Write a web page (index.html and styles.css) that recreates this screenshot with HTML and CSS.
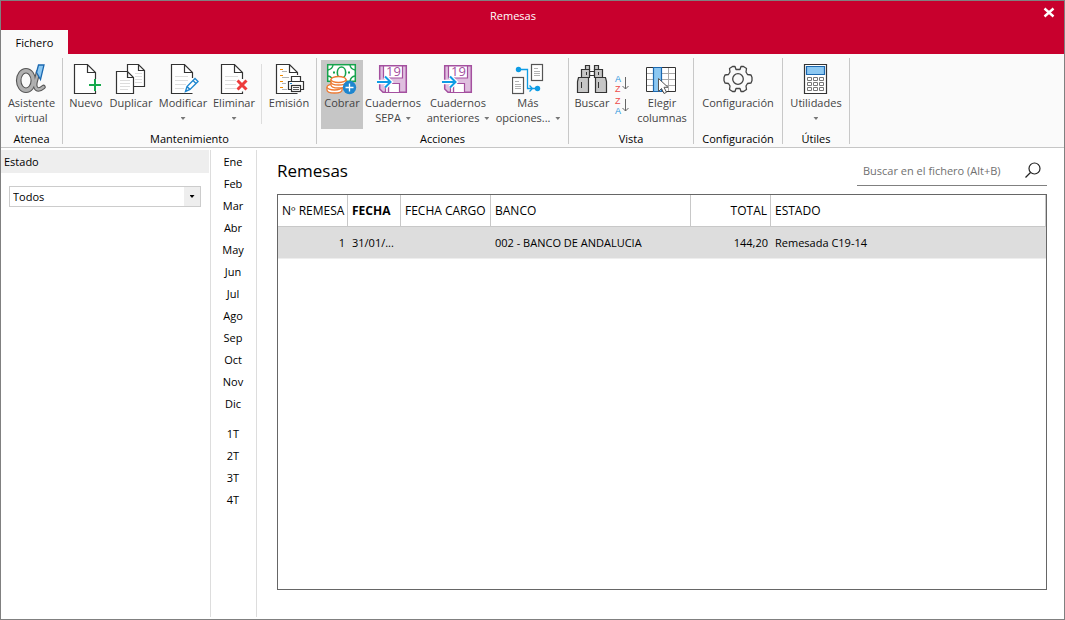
FILE: index.html
```html
<!DOCTYPE html>
<html lang="es">
<head>
<meta charset="utf-8">
<title>Remesas</title>
<link rel="stylesheet" href="styles.css">
</head>
<body>
<div class="window">
  <header class="titlebar">
    <h1 class="window-title">Remesas</h1>
    <button class="close" aria-label="Cerrar"><svg width="12" height="12" viewBox="0 0 12 12"><path d="M1.500 1.500l9 8M10.500 1.500l-9 8" stroke="#fff" stroke-width="2.400"/></svg></button>
    <button class="tab">Fichero</button>
  </header>

  <nav class="ribbon" aria-label="Fichero">
    <section class="group group-atenea">
      <div class="tools">
        <button class="tool">
          <svg class="icon" viewBox="0 0 32 32"><g fill="none" stroke-linecap="round"><g stroke="#555"><ellipse cx="11" cy="17.500" rx="7.300" ry="9.700" stroke-width="5.600"/><path d="M23 9C22 16 19 20 20.500 24Q22.500 29 28.500 24" stroke-width="4.600"/></g><g stroke="#b0b0b0"><ellipse cx="11" cy="17.500" rx="7.300" ry="9.700" stroke-width="3.400"/><path d="M23 9C22 16 19 20 20.500 24Q22.500 29 28.500 24" stroke-width="2.400"/></g></g><path d="M23.500 2h5.500l-3.500 14.500-4-7z" fill="#8cc8f2" stroke="#1b68b0" stroke-width="1.300"/></svg>
          <span>Asistente<br>virtual</span>
        </button>
      </div>
      <h2 class="group-name">Atenea</h2>
    </section>

    <section class="group group-mantenimiento">
      <div class="tools">
        <button class="tool tool-nuevo">
          <svg class="icon" viewBox="0 0 32 32"><path d="M25.500 16V9.500L17.500 1.500h-13v29h21V28M17.500 1.500v8h8" class="page"/><path d="M25 16v12M19 22h12" stroke="#fff" stroke-width="4"/><path d="M25 16v12M19 22h12" stroke="#16a94c" stroke-width="2"/></svg>
          <span>Nuevo</span>
        </button>
        <button class="tool tool-duplicar">
          <svg class="icon" viewBox="0 0 32 32"><path d="M12.500 1.500h11l6 6v16h-17zM23.500 1.500v6h6" class="page"/><path d="M20 10.500h7M20 13.500h7M20 16.500h7M20 19.500h7" class="faint"/><path d="M1.500 8.500h11l6 6v16h-17zM12.500 8.500v6h6" class="page"/><path d="M5 17.500h10M5 20.500h10M5 23.500h10M5 26.500h8" class="faint"/></svg>
          <span>Duplicar</span>
        </button>
        <button class="tool tool-modificar">
          <svg class="icon" viewBox="0 0 32 32"><path d="M25.500 15V9.500L17.500 1.500h-13v29h21M17.500 1.500v8h8" class="page"/><path d="M8 13.500h13M8 17.500h13M8 21.500h11M8 25.500h9" class="faint"/><path d="M18.500 28.500l1.500-5 8-8 3 3-8 8zM20 23.500l3 3M26 17.500l3 3" fill="#fff" stroke="#1e86cf" stroke-width="1.400"/></svg>
          <span>Modificar</span><i class="caret"></i>
        </button>
        <button class="tool tool-eliminar">
          <svg class="icon" viewBox="0 0 32 32"><path d="M24.500 16V9.500L16.500 1.500h-13v29h21v-2M16.500 1.500v8h8" class="page"/><path d="M7 13.500h13M7 17.500h11M7 21.500h11M7 25.500h11" class="faint"/><path d="M19.500 17.500l9 9M28.500 17.500l-9 9" stroke="#ed3b3b" stroke-width="3"/></svg>
          <span>Eliminar</span><i class="caret"></i>
        </button>
        <div class="divider"></div>
        <button class="tool tool-emision">
          <svg class="icon" viewBox="0 0 32 32"><path d="M24.500 12V9.500L16.500 1.500h-13v29h21M16.500 1.500v8h8" class="page"/><path d="M7 6.500h3M7 12.500h3M7 18.500h3M7 24.500h3" stroke="#f18a00"/><path d="M9 8.500h5M9 14.500h7M9 20.500h4M9 26.500h5" stroke="#b3b3b3"/><path d="M18.500 18v-4.500h9V18" class="page"/><path d="M18.500 26.500h-3v-8h15v8h-3" class="page"/><rect x="18.500" y="22.500" width="9" height="6" class="page"/><path d="M20 24.500h6M20 26.500h6" stroke="#555"/><path d="M17 20.500h2" stroke="#1e86cf"/></svg>
          <span>Emisión</span>
        </button>
      </div>
      <h2 class="group-name">Mantenimiento</h2>
    </section>

    <section class="group group-acciones">
      <div class="tools">
        <button class="tool tool-cobrar">
          <svg class="icon" viewBox="0 0 32 32"><rect x="1.700" y="1.700" width="27.600" height="16.600" fill="#fff" stroke="#16a34c" stroke-width="1.500"/><path d="M7 2Q6.500 6 2 7M24 2q.5 4 5 5M2 13q4 .5 5 5M29 13q-4 .5-5 5" fill="none" stroke="#16a34c" stroke-width="1.400"/><ellipse cx="15.500" cy="9.500" rx="4.200" ry="5.500" fill="none" stroke="#16a34c" stroke-width="1.600"/><path d="M7 9.500h2M22 9.500h2" stroke="#16a34c" stroke-width="2"/><g fill="#fff" stroke="#ef7a32" stroke-width="1.300"><path d="M1 24v3c0 4 15 4 15 0v-3"/><ellipse cx="8.500" cy="24" rx="7.500" ry="3"/><path d="M5 19v3c0 4 15 4 15 0v-3"/><path d="M5 16v3c0 4 15 4 15 0v-3"/><ellipse cx="12.500" cy="16.500" rx="7.500" ry="3"/></g><circle cx="23.500" cy="24.500" r="6.700" fill="#1e86cf"/><path d="M23.500 20.500v8M19.500 24.500h8" stroke="#fff" stroke-width="1.300"/></svg>
          <span>Cobrar</span>
        </button>
        <button class="tool tool-sepa">
          <svg class="icon" viewBox="0 0 32 32"><path d="M2.700 2.700h26.600v26.600H6l-3.300-3.300z" fill="#dfbfdf" stroke="#a4509f" stroke-width="1.500"/><path d="M6.500 3h19v12h-19zM8.500 20.500h14v9h-14z" fill="#fff" stroke="#a4509f" stroke-width="1.200"/><path d="M11.500 23v6" stroke="#a4509f" stroke-width="1.400"/><text x="9" y="13" class="num">19</text><path d="M0 19h13M8 13.500l5.500 5.500L8 24.500" fill="none" stroke="#fff" stroke-width="4.500"/><path d="M0 19h13M8 13.500l5.500 5.500L8 24.500" fill="none" stroke="#0e9ce5" stroke-width="2"/></svg>
          <span>Cuadernos<br>SEPA <i class="caret inline"></i></span>
        </button>
        <button class="tool tool-anteriores">
          <svg class="icon" viewBox="0 0 32 32"><path d="M2.700 2.700h26.600v26.600H6l-3.300-3.300z" fill="#dfbfdf" stroke="#a4509f" stroke-width="1.500"/><path d="M6.500 3h19v12h-19zM8.500 20.500h14v9h-14z" fill="#fff" stroke="#a4509f" stroke-width="1.200"/><path d="M11.500 23v6" stroke="#a4509f" stroke-width="1.400"/><text x="9" y="13" class="num">19</text><path d="M0 19h13M8 13.500l5.500 5.500L8 24.500" fill="none" stroke="#fff" stroke-width="4.500"/><path d="M0 19h13M8 13.500l5.500 5.500L8 24.500" fill="none" stroke="#0e9ce5" stroke-width="2"/></svg>
          <span>Cuadernos<br>anteriores <i class="caret inline"></i></span>
        </button>
        <button class="tool tool-mas">
          <svg class="icon" viewBox="0 0 32 32"><rect x="19.500" y="1.500" width="11" height="16" class="doc"/><rect x=".5" y="14.500" width="11" height="16" class="doc"/><path d="M22 5.500h4M22 8.500h6M22 10.500h6M22 12.500h6M3 18.500h4M3 21.500h6M3 23.500h6M3 25.500h6" stroke="#b3b3b3"/><path d="M6.500 6.500h9v19h9M17.500 22.500l3 3-3 3" fill="none" stroke="#0e9ce5" stroke-width="1.300"/><circle cx="6.500" cy="6.500" r="2.700" fill="#0e9ce5"/><circle cx="25.500" cy="25.500" r="2.700" fill="#0e9ce5"/></svg>
          <span>Más<br>opciones... <i class="caret inline"></i></span>
        </button>
      </div>
      <h2 class="group-name">Acciones</h2>
    </section>

    <section class="group group-vista">
      <div class="tools">
        <button class="tool tool-buscar">
          <svg class="icon" viewBox="0 0 32 32"><g fill="#c6c6c6" stroke="#333" stroke-width="1.200"><path d="M9.500 2.500h4v4h-4zM18.500 2.500h4v4h-4z"/><path d="M13.500 8.500h5v4h-5z" fill="#fff"/><path d="M5.500 6.500h8v8h-8zM18.500 6.500h8v8h-8z"/><path d="M2.500 14.500h10v15h-11v-11zM19.500 14.500h10l1 4v11h-11z"/></g><path d="M5.500 19v6M22.500 19v6M10.500 9v3M22.500 9v3" stroke="#333"/></svg>
          <span>Buscar</span>
        </button>
        <div class="sorts">
          <button class="sort" aria-label="Orden ascendente"><svg width="16" height="22" viewBox="0 0 16 22"><text x="1" y="9" class="letter blue">A</text><text x="1" y="19" class="letter red">Z</text><path d="M11.500 4v12M8.500 13l3 3 3-3" fill="none" stroke="#666"/></svg></button>
          <button class="sort" aria-label="Orden descendente"><svg width="16" height="22" viewBox="0 0 16 22"><text x="1" y="9" class="letter red">Z</text><text x="1" y="19" class="letter blue">A</text><path d="M11.500 4v12M8.500 13l3 3 3-3" fill="none" stroke="#666"/></svg></button>
        </div>
        <button class="tool tool-elegir">
          <svg class="icon" viewBox="0 0 32 32"><path d="M.5 4.500h29v24H.5z" fill="#fff"/><path d="M1 10.500h28M1 16.500h28M1 22.500h28M22.500 5v23" stroke="#aaa"/><path d="M.5 4.500h29v24H.5z" fill="none" stroke="#333"/><path d="M7.500 4.500h8v24h-8z" fill="#8cc8f2" stroke="#1b68b0" stroke-width="1.200"/><path d="M12.500 15.500v13l3-3 2.500 5 2.500-1.200-2.500-5h4z" fill="#fff" stroke="#555"/></svg>
          <span>Elegir<br>columnas</span>
        </button>
      </div>
      <h2 class="group-name">Vista</h2>
    </section>

    <section class="group group-configuracion">
      <div class="tools">
        <button class="tool">
          <svg class="icon" viewBox="0 0 32 32"><g fill="none" stroke="#444" stroke-width="1.300" stroke-linejoin="round"><path d="M10.500 3.500h2.500l1 3h4l1-3h2.500l3 2-.500 3.500 1.500 2.500 3.500.500 1 2.500v3l-1 2.500-3.500.500-1.500 2.500.500 3.500-3 2H19l-1-3h-4l-1 3h-2.500l-3-2 .500-3.500-1.500-2.500-3.500-.500-1-2.500v-3l1-2.500 3.500-.500L8 9l-.500-3.500z"/><circle cx="16" cy="16" r="5.300"/></g></svg>
          <span>Configuración</span>
        </button>
      </div>
      <h2 class="group-name">Configuración</h2>
    </section>

    <section class="group group-utiles">
      <div class="tools">
        <button class="tool">
          <svg class="icon" viewBox="0 0 32 32"><path d="M4.500 1.500h22v29h-22z" fill="#fff" stroke="#333" stroke-width="1.200"/><path d="M6.500 3.500h18v8h-18z" fill="#8cc8f2" stroke="#1b68b0" stroke-width="1.200"/><g fill="#fff" stroke="#777"><path d="M7.500 14.500h4v3h-4zM13.500 14.500h4v3h-4zM19.500 14.500h4v3h-4zM7.500 19.500h4v3h-4zM13.500 19.500h4v3h-4zM19.500 19.500h4v3h-4zM7.500 24.500h4v3h-4zM13.500 24.500h4v3h-4zM19.500 24.500h4v3h-4z"/></g></svg>
          <span>Utilidades</span><i class="caret"></i>
        </button>
      </div>
      <h2 class="group-name">Útiles</h2>
    </section>
  </nav>

  <div class="workspace">
    <aside class="filters">
      <label class="filter-name" for="estado">Estado</label>
      <div class="select-box">
        <select id="estado"><option>Todos</option></select>
        <span class="drop"><i class="caret dark"></i></span>
      </div>
    </aside>

    <nav class="periods" aria-label="Periodo">
      <div class="months">
        <button>Ene</button><button>Feb</button><button>Mar</button><button>Abr</button><button>May</button><button>Jun</button><button>Jul</button><button>Ago</button><button>Sep</button><button>Oct</button><button>Nov</button><button>Dic</button>
      </div>
      <div class="quarters">
        <button>1T</button><button>2T</button><button>3T</button><button>4T</button>
      </div>
    </nav>

    <main class="content">
      <div class="heading">
        <h2 class="title">Remesas</h2>
        <form class="search">
          <input type="text" placeholder="Buscar en el fichero (Alt+B)" aria-label="Buscar en el fichero">
          <button type="button" aria-label="Buscar"><svg width="16" height="16" viewBox="0 0 16 16"><g fill="none" stroke="#222" stroke-width="1.200"><circle cx="9.500" cy="6.500" r="5.500"/><path d="M5.500 10.500L.5 15.500"/></g></svg></button>
        </form>
      </div>
      <div class="grid">
        <table>
          <colgroup><col class="col-num"><col class="col-fecha"><col class="col-cargo"><col class="col-banco"><col class="col-total"><col></colgroup>
          <thead><tr><th>Nº REMESA</th><th class="sorted">FECHA</th><th>FECHA CARGO</th><th>BANCO</th><th class="right">TOTAL</th><th>ESTADO</th></tr></thead>
          <tbody><tr><td class="right">1</td><td>31/01/...</td><td></td><td>002 - BANCO DE ANDALUCIA</td><td class="right">144,20</td><td>Remesada C19-14</td></tr></tbody>
        </table>
      </div>
    </main>
  </div>
</div>
</body>
</html>
```
FILE: styles.css
```css
* { box-sizing: border-box; }

body {
  margin: 0;
  font: 11px/15px "Open Sans", "Noto Sans", sans-serif;
  color: #000;
}

button {
  margin: 0;
  padding: 0;
  border: 0;
  background: none;
  font: inherit;
  color: inherit;
}

h1, h2 { margin: 0; font: inherit; }

.window {
  display: flex;
  flex-direction: column;
  min-height: 100vh;
  border: 1px solid #808080;
  background: #fff;
}

.titlebar {
  display: grid;
  grid-template-columns: 40px 1fr 40px;
  grid-template-rows: 29px 24px;
  background: #c8002d;
}

.window-title {
  grid-column: 2;
  padding-right: 39px;
  line-height: 30px;
  text-align: center;
  color: #fff;
}

.close {
  display: flex;
  justify-content: flex-end;
  align-items: center;
  padding: 0 9px 6px 0;
}

.tab {
  grid-row: 2;
  grid-column: 1 / 3;
  justify-self: start;
  width: 67px;
  background: #fafafa;
}

.ribbon {
  display: flex;
  height: 94px;
  padding-top: 4px;
  background: #fafafa;
  border-bottom: 1px solid #c6c6c6;
}

.group {
  display: flex;
  flex-direction: column;
  height: 86px;
  border-right: 1px solid #c8c8c8;
}

.group-atenea { width: 62px; }
.group-mantenimiento { width: 254px; }
.group-acciones { width: 252px; }
.group-vista { width: 125px; }
.group-configuracion { width: 89px; }
.group-utiles { width: 67px; }

.tools {
  display: flex;
  flex: none;
  justify-content: center;
  height: 73px;
  padding: 2px 0;
}

.group-mantenimiento .tools,
.group-vista .tools { justify-content: flex-start; padding-left: 2px; }
.group-acciones .tools { justify-content: flex-start; padding-left: 4px; }

.group-name { text-align: center; }

.tool {
  display: flex;
  flex-direction: column;
  align-items: center;
  padding-top: 3px;
  color: #444;
  white-space: nowrap;
}

.icon {
  width: 32px;
  height: 32px;
  flex: none;
}

.tool-nuevo { width: 42px; }
.tool-duplicar { width: 48px; }
.tool-modificar { width: 56px; }
.tool-eliminar { width: 46px; }
.tool-emision { width: 52px; }
.tool-cobrar { width: 42px; background: #c6c6c6; }
.tool-sepa { width: 60px; }
.tool-anteriores { width: 70px; }
.tool-mas { width: 70px; }
.tool-buscar { width: 42px; }
.tool-elegir { width: 58px; }

.divider {
  width: 1px;
  height: 60px;
  margin: 4px 1px 0 4px;
  background: #ddd;
}

.caret {
  width: 5px;
  height: 3px;
  margin-top: 7px;
  background: #777;
  clip-path: polygon(0 0, 100% 0, 50% 100%);
}

.caret.inline {
  display: inline-block;
  margin: 0 0 2px 2px;
}

.caret.dark { margin: 0; background: #000; }

.page { fill: #fff; stroke: #333; stroke-width: 1.2; }
.doc { fill: #fff; stroke: #555; stroke-width: 1.2; }
.faint { stroke: #ddd; }

.num { font: 13px "Open Sans", sans-serif; fill: #a4509f; }
.letter { font: 9px "Liberation Sans", sans-serif; }
.blue { fill: #2694dc; }
.red { fill: #ed4b4b; }

.sorts {
  display: flex;
  flex-direction: column;
  width: 20px;
  padding: 13px 0 0 1px;
}

.sort { height: 22px; }
.sort svg { display: block; }

.workspace {
  display: flex;
  flex: 1;
  padding: 2px 0;
}

.filters { width: 209px; padding-right: 1px; }

.filter-name {
  display: block;
  padding: 4px 3px;
  background: #eee;
}

.select-box {
  display: flex;
  height: 21px;
  margin: 13px 8px 0;
  border: 1px solid #ccc;
}

.select-box select {
  flex: 1;
  padding: 0 3px;
  border: 0;
  background: #fff;
  font: inherit;
  appearance: none;
}

.drop {
  display: flex;
  align-items: center;
  justify-content: center;
  width: 16px;
  background: #eee;
}

.periods {
  width: 47px;
  border: solid #ddd;
  border-width: 0 1px;
}

.periods button {
  display: block;
  width: 100%;
  height: 22px;
  padding-right: 1px;
}

.months { margin-bottom: 8px; }

.content {
  display: flex;
  flex: 1;
  flex-direction: column;
  padding: 3px 17px 27px 20px;
}

.heading {
  display: flex;
  justify-content: space-between;
  margin-bottom: 5px;
}

.title { font-size: 17px; line-height: 36px; }

.search {
  display: flex;
  align-items: center;
  width: 190px;
  height: 33px;
  padding: 2px 6px 0;
  border-bottom: 1px solid #808080;
}

.search input {
  flex: 1;
  min-width: 0;
  padding: 0;
  border: 0;
  outline: 0;
  background: none;
  font: inherit;
}

.search input::placeholder { color: #707070; opacity: 1; }

.search svg { display: block; }

.grid {
  flex: 1;
  border: 1px solid #666;
}

table {
  width: 100%;
  table-layout: fixed;
  border-collapse: separate;
  border-spacing: 0;
}

.col-num { width: 70px; }
.col-fecha { width: 53px; }
.col-cargo { width: 90px; }
.col-banco { width: 200px; }
.col-total { width: 80px; }

th, td {
  height: 32px;
  padding: 0 3px 0 4px;
  text-align: left;
  white-space: nowrap;
  font-weight: normal;
}

th {
  border: solid #c8c8c8;
  border-width: 0 1px 1px 0;
  font-size: 12px;
}

td {
  background: #ddd;
  border-bottom: 1px solid #eee;
}

.sorted { font-weight: bold; }
.right { text-align: right; }
```
